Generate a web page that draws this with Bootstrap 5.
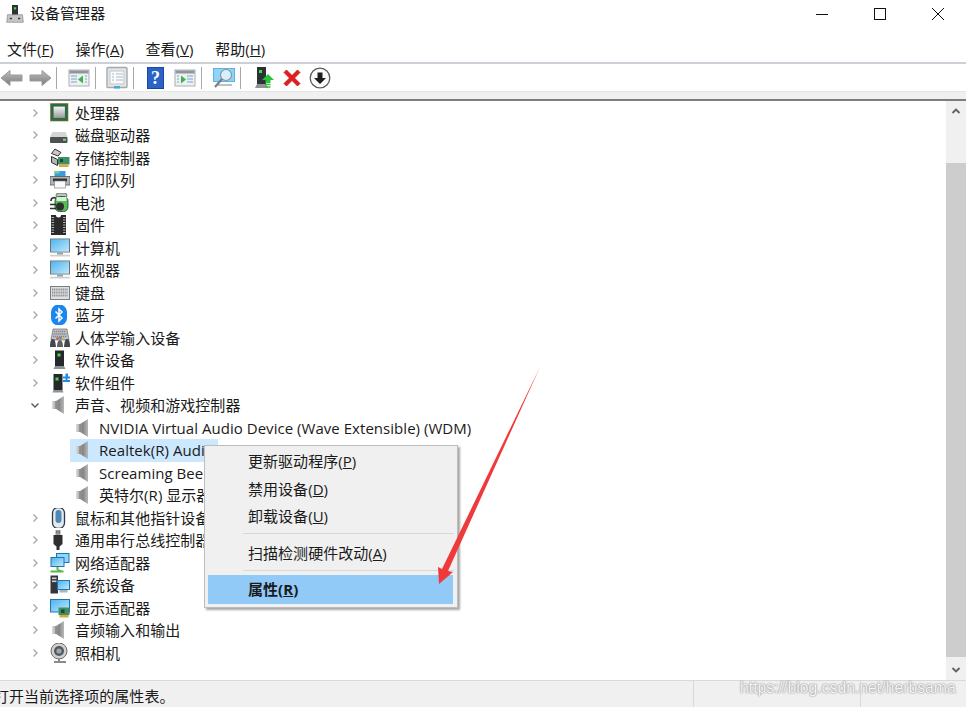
<!DOCTYPE html>
<html lang="zh-CN">
<head>
<meta charset="utf-8">
<title>设备管理器</title>
<link href="https://cdn.jsdelivr.net/npm/bootstrap@5.3.0/dist/css/bootstrap.min.css" rel="stylesheet">
<style>
html,body{height:100%;overflow:hidden}
body{font-family:"Open Sans","Noto Sans CJK SC",sans-serif;font-size:15px;color:#1a1a1a;background:#fff;line-height:22.5px;letter-spacing:.04px}
.win-shell{height:707px;width:966px;position:relative;overflow:hidden}
.title-bar{height:36px;padding:0 0 9px 6px}
.title-text{margin-left:6px;font-size:15px}
.win-btn{width:58px;display:flex;justify-content:center}
.win-btns{margin-right:-1px}
.menu-bar{height:26px;padding-left:7px;gap:21.6px;border-bottom:2px solid #cdd0d6;box-sizing:content-box}
.tool-bar{height:27px;gap:4px}
.tool-sep{width:1px;height:22px;background:#a8a8a8}
.m2{margin-right:2px}.m5{margin-right:5px}.m6{margin-right:6px}.m7{margin-right:7px}
.tool-strip{height:8px;background:#f0f0f0;border-top:1px solid #e6e6e6}
.tool-line{height:2px;background:#7c7c7c}
.tree-wrap{height:579px}
.tree-pane{padding-top:.5px}
.tree-row{height:22.5px;padding-left:30px}
.tw-chev{width:10px;height:10px;flex:none}
.tw-ico{width:20px;height:20px;flex:none;margin-left:10px;margin-right:5px}
.child-row{padding-left:70px}
.child-row .tw-ico{margin-left:4px;margin-right:5px}
.child-inner{height:22.5px;width:148px;white-space:nowrap}
.child-wide{width:auto}
.child-sel{background:#cce8ff}
.sb-track{width:20px;background:#f0f0f0}
.sb-btn{height:20px;flex:none}
.sb-space{height:42px;flex:none}
.sb-thumb{height:494px;background:#cdcdcd;flex:none}
.status-line{height:1px;background:#d9d9d9}
.status-bar{height:26px;background:#f0f0f0;white-space:nowrap;font-size:15px}
.status-text{margin-left:-6px;padding-top:4px;width:699px;overflow:hidden;flex:none}
.status-cell{width:167px;border-left:1px solid #d9d9d9;flex:none}
.water-mark{position:absolute;z-index:1001;left:740px;top:677px;font:15.7px/22px "Liberation Sans",sans-serif;color:#f4f4f4;text-shadow:0 0 2px #8d8d8d,0 0 1px #9a9a9a;white-space:nowrap}
.ctx-menu.dropdown-menu{position:absolute;display:block;left:204px;top:445px;width:254px;height:163px;min-width:0;padding:2px 3px 3px;margin:0;background:#f0f0f0;border:1px solid #bdbdbd;border-radius:0;box-shadow:2px 2px 2px rgba(0,0,0,.35);font-size:15px}
.ctx-menu .dropdown-item{height:27.5px;line-height:27.5px;padding:0 0 0 40px;color:#1a1a1a;background:transparent}
.ctx-menu .dropdown-item.ctx-active{height:29px;line-height:29px;background:#91c9f7;font-weight:700;width:245px}
.ctx-menu .dropdown-divider{margin:2px 0 3px 35px;border-color:#d8d8d8;opacity:1}
.ctx-menu .dd-a{margin-top:2px;margin-bottom:6px}
.ctx-menu .dd-b{margin-top:3px;margin-bottom:4px}
.red-arrow{position:absolute;z-index:1001;left:430px;top:360px;width:120px;height:235px}
</style>
</head>
<body>
<svg width="0" height="0" class="position-absolute">
<defs>
<linearGradient id="gSil" x1="0" y1="0" x2="0" y2="1"><stop offset="0" stop-color="#f4f4f4"/><stop offset="1" stop-color="#9b9b9b"/></linearGradient>
<linearGradient id="gArr" x1="0" y1="0" x2="0" y2="1"><stop offset="0" stop-color="#bdbdbd"/><stop offset="1" stop-color="#7c7c7c"/></linearGradient>
<linearGradient id="gScr" x1="0" y1="0" x2="1" y2="1"><stop offset="0" stop-color="#4fb4ee"/><stop offset="1" stop-color="#bfe8fb"/></linearGradient>
<linearGradient id="gSpk" x1="0" y1="0" x2="1" y2="0"><stop offset="0" stop-color="#dedede"/><stop offset=".55" stop-color="#838383"/><stop offset="1" stop-color="#b9b9b9"/></linearGradient>

<symbol id="i-chev-r" viewBox="0 0 10 10"><path d="M3.500 1.500 7 5 3.500 8.500" fill="none" stroke="#a6a6a6" stroke-width="1.300"/></symbol>
<symbol id="i-chev-d" viewBox="0 0 10 10"><path d="M1.500 3.500 5 7l3.500-3.500" fill="none" stroke="#555" stroke-width="1.300"/></symbol>

<symbol id="i-cpu" viewBox="0 0 20 20"><rect x="0" y="0" width="18.500" height="18.500" fill="#c9a94a"/><rect x=".6" y=".6" width="17.300" height="17.300" fill="#2c6a4a"/><rect x="3.600" y="3.600" width="11.300" height="11.300" fill="url(#gSil)"/></symbol>
<symbol id="i-disk" viewBox="0 0 20 20"><path d="M2.500 7h13l2 5H0z" fill="#d4d4d4"/><rect x="0" y="12" width="17.500" height="6" rx="1" fill="#4d5154"/><rect x="13" y="13.800" width="3" height="1.800" fill="#7fe07f"/></symbol>
<symbol id="i-store" viewBox="0 0 20 20"><path d="M5 1 11 4.500 8 8 1.500 5.500z" fill="#c9c9c9" stroke="#333" stroke-width="1"/><path d="M1.500 8.500l6 3v6l-6-3z" fill="#b5b5b5" stroke="#333" stroke-width="1"/><rect x="8" y="9" width="11.500" height="7.500" fill="#3e8f66"/><rect x="10" y="11" width="3" height="3" fill="#174a31"/><rect x="9" y="16.500" width="9.500" height="2.500" fill="#d9a93c"/></symbol>
<symbol id="i-print" viewBox="0 0 20 20"><rect x="4.500" y="1" width="11" height="6" fill="#3f9be0"/><rect x="4.500" y="1" width="5" height="2.500" fill="#7bd08c"/><path d="M0 6.500h20v8.500H0z" fill="#b0b2b4" stroke="#555" stroke-width=".8"/><rect x="3" y="8.500" width="14" height="3" fill="#303235"/><rect x="4.500" y="11" width="11" height="7" fill="#fafafa" stroke="#777" stroke-width=".6"/></symbol>
<symbol id="i-batt" viewBox="0 0 20 20"><path d="M1 8C1 4 5 4 7 6" fill="none" stroke="#2f2f2f" stroke-width="1.600"/><rect x="6" y="0" width="11" height="5" rx="2.500" fill="#b7c7b7" stroke="#444" stroke-width=".7"/><rect x="5" y="3.500" width="13" height="15" rx="4.500" fill="#4fbf58" stroke="#333" stroke-width=".8"/><rect x="6.500" y="4" width="10" height="4" fill="#d3f1d3"/><circle cx="10" cy="13.500" r="4" fill="#2f2f2f"/><path d="M0 11.500h6M0 15.500h6" stroke="#2f2f2f" stroke-width="1.700"/></symbol>
<symbol id="i-firm" viewBox="0 0 20 20"><path d="M1 0h5a2.500 2.500 0 0 0 5 0h5v20H1z" fill="#2a2a2a"/><path d="M1.500 2.500h14M1.500 5h14M1.500 7.500h14M1.500 10h14M1.500 12.500h14M1.500 15h14M1.500 17.500h14" stroke="#c7c7c7" stroke-width=".9" stroke-dasharray="2.600 9 2.600 0"/></symbol>
<symbol id="i-mon" viewBox="0 0 20 20"><rect x="0" y="0.500" width="20" height="14" fill="#6e7479"/><rect x="1" y="1.300" width="18" height="12.400" fill="url(#gScr)"/><rect x="7" y="14.500" width="6" height="2.200" fill="#9aa2a8"/><rect x="0" y="16.700" width="20" height="1.800" fill="#cfd2d5"/></symbol>
<symbol id="i-kbd" viewBox="0 0 20 20"><rect x="0" y="3" width="20" height="14" fill="#797c80"/><rect x="1" y="4" width="18" height="12" fill="#dfe0e1"/><path d="M2 6.500h16M2 9.500h16M2 12.500h16" stroke="#8f9296" stroke-width="1.800" stroke-dasharray="1.200 .6"/></symbol>
<symbol id="i-bt" viewBox="0 0 20 20"><rect x="1" y="-.5" width="16" height="21" rx="7.500" fill="#1a86ee"/><path d="M5.500 6.500 12 13l-3 3V4l3 3-6.500 6.500" fill="none" stroke="#fff" stroke-width="1.500"/></symbol>
<symbol id="i-hid" viewBox="0 0 20 20"><path d="M3 1h14l2 11H1z" fill="#bfc2c5" stroke="#6c6c6c" stroke-width=".7"/><path d="M4 3.500h12M3.500 6h13M3 8.500h14" stroke="#83868a" stroke-width="1.400" stroke-dasharray="1.300 .7"/><path d="M0 19c0-6 1-8 3-8s2.500 3 3 8zM14 19c.5-5 1-8 3-8s3 2 3 8z" fill="#42484c"/><path d="M7 19c0-4 1-7 3-7s3 3 3 7z" fill="#5d6266"/><circle cx="7.500" cy="10.500" r="1.200" fill="#e0453d"/><circle cx="10.500" cy="10" r="1.200" fill="#3b7ddc"/><circle cx="13" cy="10.500" r="1.200" fill="#e3b33b"/></symbol>
<symbol id="i-srv" viewBox="0 0 20 20"><rect x="5" y="0.500" width="9" height="16" fill="#26292c"/><rect x="7.500" y="3.500" width="3" height="3" fill="#48d64e"/><path d="M3.500 19l1.500-3h9l1.500 3z" fill="#8e9295"/></symbol>
<symbol id="i-srvp" viewBox="0 0 20 20"><rect x="3.500" y="1" width="9" height="16" fill="#26292c"/><rect x="5.500" y="4.500" width="3" height="3" fill="#48d64e"/><path d="M2.500 19.500l1-2.500h9l1 2.500z" fill="#8e9295"/><path d="M15.500 .5h2.500v3H20v2h-2.500v1.500H20v2h-7v-2h2.500V5.500H13v-2h2.500z" fill="#1d8fe3"/></symbol>
<symbol id="i-spk" viewBox="0 0 20 20"><path d="M2 6h4L14 1v18L6 14H2z" fill="url(#gSpk)"/><path d="M6 6v8" stroke="#6e6e6e" stroke-width=".8"/></symbol>
<symbol id="i-mouse" viewBox="0 0 20 20"><rect x="2.500" y="-.5" width="12" height="21" rx="5.500" fill="#e4e9ed" stroke="#2e3a47" stroke-width="1.300"/><rect x="5.500" y="2" width="6" height="13" rx="3" fill="#4e88b8"/></symbol>
<symbol id="i-usb" viewBox="0 0 20 20"><rect x="5.500" y="0" width="5" height="5" fill="#9a9a9a"/><path d="M6 2h1.300M8.700 2H10" stroke="#444"/><path d="M3.500 5h9v9l-3 2.500v3.500h-3v-3.500l-3-2.500z" fill="#2f2f2f"/></symbol>
<symbol id="i-net" viewBox="0 0 20 20"><rect x="6" y="0" width="13.500" height="10" fill="#1b76b8"/><rect x="7" y="1" width="11.500" height="8" fill="#8cd6f7"/><rect x="0.500" y="4" width="14" height="10" fill="#1b76b8"/><rect x="1.500" y="5" width="12" height="8" fill="url(#gScr)"/><path d="M7.500 14v3M.5 18.500h13M7.500 17l4 1.500" stroke="#54b84a" stroke-width="2"/></symbol>
<symbol id="i-sys" viewBox="0 0 20 20"><rect x="0.500" y="0.500" width="7.500" height="18" fill="#34373a"/><rect x="2" y="2.500" width="4.500" height="1.600" fill="#cfd2d4"/><rect x="2" y="5.500" width="4.500" height="1.600" fill="#cfd2d4"/><rect x="7" y="5" width="13" height="10" fill="#1b76b8"/><rect x="8" y="6" width="11" height="8" fill="url(#gScr)"/><rect x="9.500" y="15" width="8" height="2.500" fill="#a9b4bb"/></symbol>
<symbol id="i-disp" viewBox="0 0 20 20"><rect x="0" y="1" width="20" height="13.500" fill="#1b76b8"/><rect x="1" y="2" width="18" height="11.500" fill="url(#gScr)"/><rect x="8.500" y="9.500" width="11" height="7.500" fill="#3e8f66"/><rect x="11" y="11.500" width="3.500" height="3.500" fill="#174a31"/><rect x="9.500" y="17" width="9" height="2.500" fill="#d9a93c"/></symbol>
<symbol id="i-cam" viewBox="0 0 20 20"><path d="M4 19h12" stroke="#8b8b8b" stroke-width="2"/><circle cx="9" cy="8" r="8" fill="#d0d0d0" stroke="#6c6c6c"/><circle cx="9" cy="8" r="5" fill="#53585c"/><circle cx="9" cy="8" r="2.600" fill="#9aa6b3"/><path d="M9 16v3" stroke="#8b8b8b" stroke-width="2"/></symbol>

<symbol id="t-back" viewBox="0 0 24 24"><path d="M1 12 10 4.500v4.500h12v6H10v4.500z" fill="url(#gArr)" stroke="#9b9b9b"/></symbol>
<symbol id="t-fwd" viewBox="0 0 24 24"><path d="M23 12 14 4.500v4.500H2v6h12v4.500z" fill="url(#gArr)" stroke="#9b9b9b"/></symbol>
<symbol id="t-winl" viewBox="0 0 24 24"><rect x="2" y="4" width="20" height="16" fill="#eef1f3" stroke="#a9aeb3"/><rect x="2.500" y="4.500" width="19" height="3" fill="#8f959b"/><path d="M4 10h6M4 13h6M4 16h6" stroke="#9dc0da" stroke-width="1.600"/><path d="M11 13.500l5-4v8z" fill="#3eb24a"/><path d="M18 10h2M18 13h2M18 16h2" stroke="#9dc0da" stroke-width="1.600"/></symbol>
<symbol id="t-winr" viewBox="0 0 24 24"><rect x="2" y="4" width="20" height="16" fill="#eef1f3" stroke="#a9aeb3"/><rect x="2.500" y="4.500" width="19" height="3" fill="#8f959b"/><path d="M4 10h2M4 13h2M4 16h2" stroke="#9dc0da" stroke-width="1.600"/><path d="M13 13.500l-5-4v8z" fill="#3eb24a"/><path d="M14 10h6M14 13h6M14 16h6" stroke="#9dc0da" stroke-width="1.600"/></symbol>
<symbol id="t-prop" viewBox="0 0 24 24"><rect x="2" y="1.500" width="20" height="20" rx="1" fill="#e4e6e8" stroke="#a4a9ae" stroke-width="1.400"/><rect x="5" y="5" width="14" height="13" fill="#fafafa" stroke="#c0c5c9"/><path d="M7 8h2M11 8h7M7 11h2M11 11h7M7 14h2M11 14h7" stroke="#a8bccb"/><rect x="9" y="20" width="6" height="2.500" fill="#45a9e2"/></symbol>
<symbol id="t-help" viewBox="0 0 24 24"><rect x="4" y="1" width="17" height="22" fill="#1c44a8"/><rect x="5" y="2" width="15" height="20" fill="#2b62c6"/></symbol>
<symbol id="t-scan" viewBox="0 0 24 24"><rect x="1" y="2" width="22" height="14" fill="#5ab4e6"/><rect x="2" y="3" width="20" height="12" fill="#8fd4f5"/><rect x="6" y="18" width="14" height="2" fill="#b9c2c7"/><circle cx="14" cy="9" r="5.500" fill="#d7f0fb" stroke="#8b959b" stroke-width="1.200"/><path d="M10 13 3 21" stroke="#7d7d7d" stroke-width="2.200"/></symbol>
<symbol id="t-upd" viewBox="0 0 24 24"><rect x="5" y="1" width="9" height="17" fill="#2f3235"/><rect x="7" y="4" width="3" height="3" fill="#48d64e"/><path d="M3 22l2-4h9l2 4z" fill="#8f9397"/><path d="M16 8l6 6h-3.500v3h-5v-3H10z" fill="#27c23a"/><path d="M13.500 18.500h5M13.500 21h5" stroke="#27c23a" stroke-width="1.400"/></symbol>
<symbol id="t-x" viewBox="0 0 24 24"><path d="M4 6.500 6.500 4 12 9.500 17.500 4 20 6.500 14.500 12 20 17.500 17.500 20 12 14.500 6.500 20 4 17.500 9.500 12z" fill="#e21d1d" stroke="#c61212" stroke-width=".8"/></symbol>
<symbol id="t-dl" viewBox="0 0 24 24"><circle cx="12" cy="12" r="9.800" fill="#fafafa" stroke="#5b5b5b" stroke-width="1.300"/><path d="M9.500 6.500h5V12H18l-6 6-6-6h3.500z" fill="#1d1d1d"/></symbol>
<symbol id="t-app" viewBox="0 0 24 24"><rect x="8" y="0" width="8" height="14" fill="#2f3235"/><rect x="10.500" y="3" width="3" height="3" fill="#48d64e"/><path d="M2 13h20l1 10H1z" fill="#c4c6c8" stroke="#8a8c8e"/><rect x="5" y="17" width="3" height="2" fill="#3c3c3c"/><rect x="16" y="17" width="3" height="2" fill="#3c3c3c"/></symbol>
</defs>
</svg>

<div class="win-shell d-flex flex-column">
  <div class="title-bar d-flex align-items-center">
    <svg width="18" height="20"><use href="#t-app" width="18" height="20"/></svg>
    <span class="title-text">设备管理器</span>
    <div class="win-btns d-flex ms-auto">
      <span class="win-btn"><svg width="14" height="14" viewBox="0 0 14 14"><path d="M1 7.500h12" stroke="#111" stroke-width="1"/></svg></span>
      <span class="win-btn"><svg width="14" height="14" viewBox="0 0 14 14"><rect x="1.500" y="1.500" width="11" height="11" fill="none" stroke="#111"/></svg></span>
      <span class="win-btn"><svg width="14" height="14" viewBox="0 0 14 14"><path d="M1 1l12 12M13 1 1 13" stroke="#111" stroke-width="1"/></svg></span>
    </div>
  </div>
  <div class="menu-bar d-flex align-items-center">
    <span>文件(<u>F</u>)</span><span>操作(<u>A</u>)</span><span>查看(<u>V</u>)</span><span>帮助(<u>H</u>)</span>
  </div>
  <div class="tool-bar d-flex align-items-center">
    <svg width="24" height="24"><use href="#t-back"/></svg>
    <svg width="24" height="24"><use href="#t-fwd"/></svg>
    <span class="tool-sep m6"></span>
    <svg width="24" height="24"><use href="#t-winl"/></svg>
    <span class="tool-sep m5"></span>
    <svg width="24" height="24"><use href="#t-prop"/></svg>
    <span class="tool-sep m5"></span>
    <svg width="24" height="24" class="m2"><use href="#t-help"/><text x="12.500" y="18" text-anchor="middle" font-family="Liberation Serif,serif" font-weight="700" font-size="18" fill="#fff">?</text></svg>
    <svg width="24" height="24"><use href="#t-winr"/></svg>
    <span class="tool-sep m6"></span>
    <svg width="24" height="24"><use href="#t-scan"/></svg>
    <span class="tool-sep m7"></span>
    <svg width="24" height="24"><use href="#t-upd"/></svg>
    <svg width="24" height="24"><use href="#t-x"/></svg>
    <svg width="24" height="24"><use href="#t-dl"/></svg>
  </div>
  <div class="tool-strip"></div>
  <div class="tool-line"></div>

  <div class="tree-wrap d-flex">
    <div class="tree-pane flex-grow-1 overflow-hidden">
      <div class="tree-row d-flex align-items-center"><svg class="tw-chev"><use href="#i-chev-r"/></svg><svg class="tw-ico"><use href="#i-cpu"/></svg><span>处理器</span></div>
      <div class="tree-row d-flex align-items-center"><svg class="tw-chev"><use href="#i-chev-r"/></svg><svg class="tw-ico"><use href="#i-disk"/></svg><span>磁盘驱动器</span></div>
      <div class="tree-row d-flex align-items-center"><svg class="tw-chev"><use href="#i-chev-r"/></svg><svg class="tw-ico"><use href="#i-store"/></svg><span>存储控制器</span></div>
      <div class="tree-row d-flex align-items-center"><svg class="tw-chev"><use href="#i-chev-r"/></svg><svg class="tw-ico"><use href="#i-print"/></svg><span>打印队列</span></div>
      <div class="tree-row d-flex align-items-center"><svg class="tw-chev"><use href="#i-chev-r"/></svg><svg class="tw-ico"><use href="#i-batt"/></svg><span>电池</span></div>
      <div class="tree-row d-flex align-items-center"><svg class="tw-chev"><use href="#i-chev-r"/></svg><svg class="tw-ico"><use href="#i-firm"/></svg><span>固件</span></div>
      <div class="tree-row d-flex align-items-center"><svg class="tw-chev"><use href="#i-chev-r"/></svg><svg class="tw-ico"><use href="#i-mon"/></svg><span>计算机</span></div>
      <div class="tree-row d-flex align-items-center"><svg class="tw-chev"><use href="#i-chev-r"/></svg><svg class="tw-ico"><use href="#i-mon"/></svg><span>监视器</span></div>
      <div class="tree-row d-flex align-items-center"><svg class="tw-chev"><use href="#i-chev-r"/></svg><svg class="tw-ico"><use href="#i-kbd"/></svg><span>键盘</span></div>
      <div class="tree-row d-flex align-items-center"><svg class="tw-chev"><use href="#i-chev-r"/></svg><svg class="tw-ico"><use href="#i-bt"/></svg><span>蓝牙</span></div>
      <div class="tree-row d-flex align-items-center"><svg class="tw-chev"><use href="#i-chev-r"/></svg><svg class="tw-ico"><use href="#i-hid"/></svg><span>人体学输入设备</span></div>
      <div class="tree-row d-flex align-items-center"><svg class="tw-chev"><use href="#i-chev-r"/></svg><svg class="tw-ico"><use href="#i-srv"/></svg><span>软件设备</span></div>
      <div class="tree-row d-flex align-items-center"><svg class="tw-chev"><use href="#i-chev-r"/></svg><svg class="tw-ico"><use href="#i-srvp"/></svg><span>软件组件</span></div>
      <div class="tree-row d-flex align-items-center"><svg class="tw-chev"><use href="#i-chev-d"/></svg><svg class="tw-ico"><use href="#i-spk"/></svg><span>声音、视频和游戏控制器</span></div>
      <div class="child-row"><div class="child-inner child-wide d-flex align-items-center"><svg class="tw-ico"><use href="#i-spk"/></svg><span>NVIDIA Virtual Audio Device (Wave Extensible) (WDM)</span></div></div>
      <div class="child-row"><div class="child-inner child-sel d-flex align-items-center"><svg class="tw-ico"><use href="#i-spk"/></svg><span>Realtek(R) Audio</span></div></div>
      <div class="child-row"><div class="child-inner d-flex align-items-center"><svg class="tw-ico"><use href="#i-spk"/></svg><span>Screaming Bee Audio</span></div></div>
      <div class="child-row"><div class="child-inner d-flex align-items-center"><svg class="tw-ico"><use href="#i-spk"/></svg><span>英特尔(R) 显示器音频</span></div></div>
      <div class="tree-row d-flex align-items-center"><svg class="tw-chev"><use href="#i-chev-r"/></svg><svg class="tw-ico"><use href="#i-mouse"/></svg><span>鼠标和其他指针设备</span></div>
      <div class="tree-row d-flex align-items-center"><svg class="tw-chev"><use href="#i-chev-r"/></svg><svg class="tw-ico"><use href="#i-usb"/></svg><span>通用串行总线控制器</span></div>
      <div class="tree-row d-flex align-items-center"><svg class="tw-chev"><use href="#i-chev-r"/></svg><svg class="tw-ico"><use href="#i-net"/></svg><span>网络适配器</span></div>
      <div class="tree-row d-flex align-items-center"><svg class="tw-chev"><use href="#i-chev-r"/></svg><svg class="tw-ico"><use href="#i-sys"/></svg><span>系统设备</span></div>
      <div class="tree-row d-flex align-items-center"><svg class="tw-chev"><use href="#i-chev-r"/></svg><svg class="tw-ico"><use href="#i-disp"/></svg><span>显示适配器</span></div>
      <div class="tree-row d-flex align-items-center"><svg class="tw-chev"><use href="#i-chev-r"/></svg><svg class="tw-ico"><use href="#i-spk"/></svg><span>音频输入和输出</span></div>
      <div class="tree-row d-flex align-items-center"><svg class="tw-chev"><use href="#i-chev-r"/></svg><svg class="tw-ico"><use href="#i-cam"/></svg><span>照相机</span></div>
    </div>
    <div class="sb-track d-flex flex-column">
      <div class="sb-btn d-flex align-items-center justify-content-center"><svg width="10" height="8" viewBox="0 0 10 8"><path d="M1.500 6 5 2.500 8.500 6" fill="none" stroke="#606060" stroke-width="1.800"/></svg></div>
      <div class="sb-space"></div>
      <div class="sb-thumb"></div>
      <div class="flex-grow-1"></div>
      <div class="sb-btn d-flex align-items-center justify-content-center"><svg width="10" height="8" viewBox="0 0 10 8"><path d="M1.500 2 5 5.500 8.500 2" fill="none" stroke="#606060" stroke-width="1.800"/></svg></div>
    </div>
  </div>

  <div class="status-line"></div>
  <div class="status-bar d-flex flex-grow-1">
    <div class="status-text">打开当前选择项的属性表。</div>
    <div class="status-cell"></div>
    <div class="status-cell"></div>
  </div>

  <div class="ctx-menu dropdown-menu">
    <a class="dropdown-item" href="#">更新驱动程序(<u>P</u>)</a>
    <a class="dropdown-item" href="#">禁用设备(<u>D</u>)</a>
    <a class="dropdown-item" href="#">卸载设备(<u>U</u>)</a>
    <hr class="dropdown-divider dd-a">
    <a class="dropdown-item" href="#">扫描检测硬件改动(<u>A</u>)</a>
    <hr class="dropdown-divider dd-b">
    <a class="dropdown-item ctx-active" href="#">属性(<u>R</u>)</a>
  </div>

  <svg class="red-arrow" viewBox="430 360 120 235"><polygon points="540,367 448,571 453,572 439,584 438,567 442,569" fill="#f0393a"/></svg>
  <div class="water-mark">https://blog.csdn.net/herbsama</div>
</div>
<script src="https://cdn.jsdelivr.net/npm/bootstrap@5.3.0/dist/js/bootstrap.bundle.min.js"></script>
</body>
</html>
